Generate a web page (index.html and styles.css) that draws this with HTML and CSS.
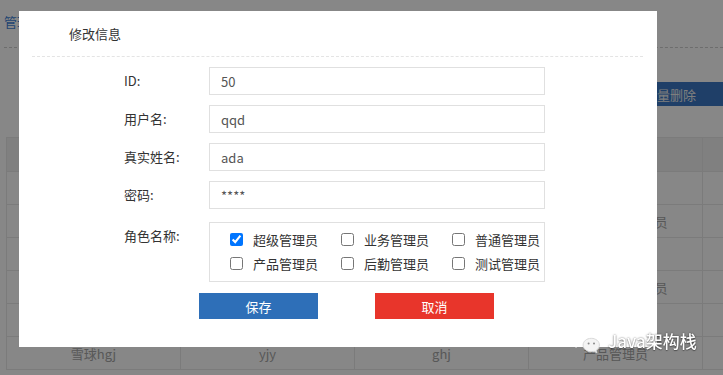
FILE: index.html
```html
<!DOCTYPE html>
<html lang="zh-CN">
<head>
    <meta charset="UTF-8">
    <meta name="viewport" content="width=device-width, initial-scale=1.0">
    <title>管理员列表</title>
    <link rel="stylesheet" href="styles.css">
</head>
<body>
    <div class="page">
        <div class="page-head">
            <h3>管理员列表</h3>
        </div>
        <div class="toolbar">
            <button class="btn-del">批量删除</button>
        </div>
        <table class="grid">
            <thead>
                <tr><th></th><th></th><th></th><th></th><th></th></tr>
            </thead>
            <tbody>
                <tr><td></td><td></td><td></td><td></td><td></td></tr>
                <tr><td></td><td></td><td></td><td>后勤，产品管理员</td><td></td></tr>
                <tr><td></td><td></td><td></td><td></td><td></td></tr>
                <tr><td></td><td></td><td></td><td>业务，超级管理员</td><td></td></tr>
                <tr><td></td><td></td><td></td><td></td><td></td></tr>
                <tr><td>雪球hgj</td><td>yjy</td><td>ghj</td><td>产品管理员</td><td></td></tr>
            </tbody>
        </table>
    </div>

    <div class="mask"></div>

    <div class="modal">
        <div class="modal-title">修改信息</div>
        <form class="edit-form">
            <label class="field-label">ID:</label>
            <input class="field-input" type="text" value="50">

            <label class="field-label">用户名:</label>
            <input class="field-input" type="text" value="qqd">

            <label class="field-label">真实姓名:</label>
            <input class="field-input" type="text" value="ada">

            <label class="field-label">密码:</label>
            <input class="field-input" type="text" value="****">

            <label class="field-label role-label">角色名称:</label>
            <div class="role-box">
                <label class="role"><input type="checkbox" checked><span>超级管理员</span></label>
                <label class="role"><input type="checkbox"><span>业务管理员</span></label>
                <label class="role"><input type="checkbox"><span>普通管理员</span></label>
                <label class="role"><input type="checkbox"><span>产品管理员</span></label>
                <label class="role"><input type="checkbox"><span>后勤管理员</span></label>
                <label class="role"><input type="checkbox"><span>测试管理员</span></label>
            </div>
        </form>
        <div class="modal-actions">
            <button class="btn btn-save">保存</button>
            <button class="btn btn-cancel">取消</button>
        </div>
    </div>

    <div class="watermark">
        <svg class="wm-icon" width="28" height="26" viewBox="0 0 28 26">
            <path d="M11 1.5c-5.5 0-9.8 3.6-9.8 8.1 0 2.5 1.3 4.6 3.4 6.1l-0.9 2.8 3.3-1.7c1.2 0.4 2.5 0.6 4 0.6" fill="rgba(255,255,255,0.12)" stroke="#fff" stroke-width="1.5" stroke-dasharray="2 1.2" stroke-linecap="round"/>
            <path d="M20.8 9.6c-0.7-4.6-5-8.1-9.8-8.1" fill="none" stroke="#fff" stroke-width="1.5" stroke-dasharray="2 1.2" stroke-linecap="round"/>
            <circle cx="7.6" cy="7.4" r="1.2" fill="#fff"/>
            <circle cx="14" cy="7.4" r="1.2" fill="#fff"/>
            <path d="M18.3 10.3c-4.6 0-8.2 3-8.2 6.7s3.6 6.7 8.2 6.7c1 0 2-0.1 2.9-0.4l2.7 1.4-0.7-2.3c1.9-1.2 3.2-3.1 3.2-5.4 0-3.7-3.6-6.7-8.1-6.7z" fill="#f4f4f4" stroke="#d8d8d8" stroke-width="1"/>
            <circle cx="15.6" cy="15.6" r="1" fill="#8a8a8a"/>
            <circle cx="21" cy="15.6" r="1" fill="#8a8a8a"/>
        </svg>
        <span class="wm-text">Java架构栈</span>
    </div>
</body>
</html>
```

FILE: styles.css
```css
/* Base */
html, body {
    margin: 0;
    height: 100%;
    overflow: hidden;
}

body {
    font-family: "Microsoft YaHei", "Noto Sans CJK SC", sans-serif;
    font-size: 13px;
    color: #333;
    background: #fff;
}

/* Background page (dimmed by the mask) */
.page {
    width: 723px;
    padding: 0 0 0 4px;
    box-sizing: border-box;
}

.page-head {
    height: 47px;
    border-bottom: 1px dashed #cfcfcf;
}

.page-head h3 {
    margin: 0;
    padding-top: 13px;
    font-size: 13px;
    font-weight: normal;
    line-height: 18px;
    color: #3f84d8;
}

.toolbar {
    display: flex;
    justify-content: flex-end;
    padding: 34px 0 31px;
}

.btn-del {
    width: 106px;
    height: 24px;
    border: none;
    background: #3b78c4;
    color: #eee;
    font-family: inherit;
    font-size: 13px;
    padding: 0;
}

.grid {
    margin-left: 2px;
    border-collapse: collapse;
    table-layout: fixed;
    width: 866px;
}

.grid th,
.grid td {
    width: 173px;
    border: 1px solid #e8e8e8;
    text-align: center;
    color: #a6a6a6;
    font-weight: normal;
    padding: 0;
    white-space: nowrap;
    overflow: hidden;
}

.grid th {
    height: 33px;
    background: #f1f1f1;
}

.grid td {
    height: 32px;
}

.mask {
    position: fixed;
    inset: 0;
    background: rgba(0, 0, 0, 0.47);
}

/* Modal */
.modal {
    position: absolute;
    top: 11px;
    left: 19px;
    width: 638px;
    height: 336px;
    background: #fff;
}

.modal-title {
    height: 45px;
    line-height: 45px;
    margin: 0 14px 0 13px;
    padding-left: 37px;
    border-bottom: 1px dashed #e4e4e4;
    color: #333;
}

.edit-form {
    display: grid;
    grid-template-columns: 85px 336px;
    row-gap: 10px;
    padding: 10px 0 0 105px;
    margin: 0;
}

.field-label {
    line-height: 28px;
    color: #333;
}

.field-input {
    height: 28px;
    box-sizing: border-box;
    border: 1px solid #e0e0e0;
    padding: 0 11px;
    font-family: inherit;
    font-size: 13px;
    color: #555;
    outline: none;
}

.role-label {
    margin-top: 3px;
}

.role-box {
    margin-top: 3px;
    height: 60px;
    box-sizing: border-box;
    border: 1px solid #e0e0e0;
    padding: 4px 0 0 20px;
    display: grid;
    grid-template-columns: repeat(3, 111px);
    grid-auto-rows: 24px;
}

.role {
    display: flex;
    align-items: center;
    gap: 10px;
    color: #333;
}

.role input {
    margin: 0;
    width: 13px;
    height: 13px;
}

.modal-actions {
    display: flex;
    gap: 57px;
    padding: 11px 0 0 180px;
}

.btn {
    width: 119px;
    height: 26px;
    border: none;
    padding: 0;
    color: #fff;
    font-family: inherit;
    font-size: 13px;
}

.btn-save {
    background: #2e6fb8;
}

.btn-cancel {
    background: #e8352b;
}

/* Watermark */
.watermark {
    position: absolute;
    left: 573px;
    top: 328px;
    display: flex;
    align-items: center;
    gap: 7px;
}

.wm-text {
    font-family: "Noto Sans CJK SC", sans-serif;
    font-size: 17px;
    font-weight: 500;
    line-height: 22px;
    color: #fff;
    text-shadow: 0 0 2px rgba(0, 0, 0, 0.6), 0 1px 1px rgba(0, 0, 0, 0.3);
}
```
